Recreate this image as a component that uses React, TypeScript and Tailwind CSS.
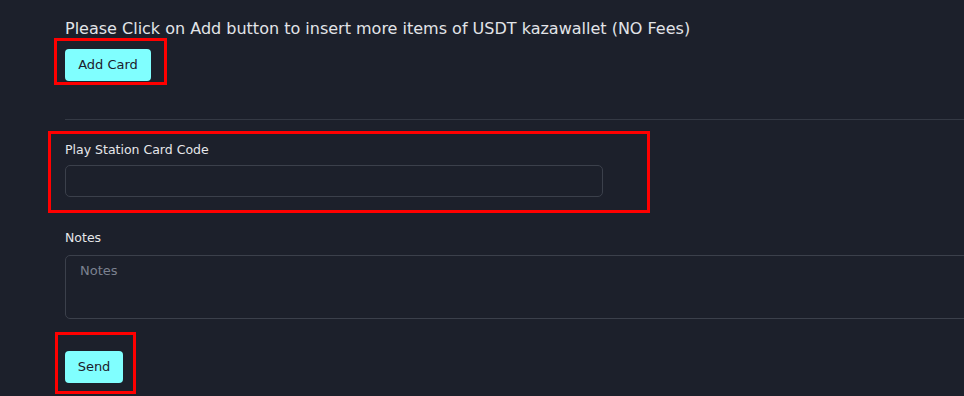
import type { ReactNode } from "react";

const FONT = { fontFamily: '"DejaVu Sans", "Noto Sans", sans-serif' };

function Marked({ children, className }: { children: ReactNode; className: string }) {
	return (
		<div className="relative">
			{children}
			<span className={`pointer-events-none absolute border-[3px] border-[#ff0000] ${className}`} />
		</div>
	);
}

function CyanButton({ label, width }: { label: string; width: string }) {
	return (
		<button
			type="button"
			className={`h-[32px] ${width} rounded-[4px] bg-[#80ffff] text-[13px] font-medium text-[#1c202b]`}
		>
			{label}
		</button>
	);
}

export default function App() {
	return (
		<div className="h-[396px] w-full overflow-hidden bg-[#1c202b] pl-[65px] text-[#e6e7ea]" style={FONT}>
			<p className="pt-[19px] text-[16px] leading-[20px] text-[#e2e4e8]">
				Please Click on Add button to insert more items of USDT kazawallet (NO Fees)
			</p>

			<div className="mt-[10px] flex">
				<Marked className="-left-[11px] -top-[11px] h-[47px] w-[113px]">
					<CyanButton label="Add Card" width="w-[86px]" />
				</Marked>
			</div>

			<div className="mt-[38px] h-px w-full bg-[#343944]" />

			<Marked className="-left-[17px] top-[11px] h-[82px] w-[602px]">
				<div className="pt-[22px]">
					<label className="block text-[12.5px] leading-[16px] font-medium">Play Station Card Code</label>
					<input
						type="text"
						className="mt-[7px] block h-[32px] w-[538px] rounded-[5px] border border-[#3b404b] bg-transparent px-3 text-[13px] outline-none"
					/>
				</div>
			</Marked>

			<div className="pt-[33px]">
				<label className="block text-[12.5px] leading-[16px] font-medium">Notes</label>
				<textarea
					placeholder="Notes"
					className="mt-[9px] block h-[64px] w-[960px] resize-none rounded-[5px] border border-[#3b404b] bg-transparent px-[14px] py-[7px] text-[13px] leading-[16px] outline-none placeholder:text-[#7b8190]"
				/>
			</div>

			<div className="mt-[32px] flex">
				<Marked className="-left-[10px] -top-[19px] h-[62px] w-[81px]">
					<CyanButton label="Send" width="w-[58px]" />
				</Marked>
			</div>
		</div>
	);
}
